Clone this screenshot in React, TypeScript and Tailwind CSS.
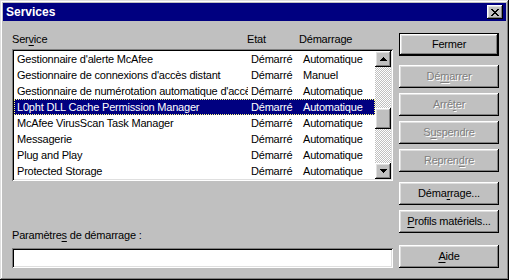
import React from "react";

const raised =
  "shadow-[inset_-1px_-1px_#000,inset_1px_1px_#fff,inset_-2px_-2px_#808080,inset_2px_2px_#dfdfdf]";
const sunken =
  "shadow-[inset_1px_1px_#808080,inset_-1px_-1px_#fff,inset_2px_2px_#000,inset_-2px_-2px_#dfdfdf]";

const rows: [string, string, string][] = [
  ["Gestionnaire d'alerte McAfee", "Démarré", "Automatique"],
  ["Gestionnaire de connexions d'accès distant", "Démarré", "Manuel"],
  ["Gestionnaire de numérotation automatique d'accès distant", "Démarré", "Automatique"],
  ["L0pht DLL Cache Permission Manager", "Démarré", "Automatique"],
  ["McAfee VirusScan Task Manager", "Démarré", "Automatique"],
  ["Messagerie", "Démarré", "Automatique"],
  ["Plug and Play", "Démarré", "Automatique"],
  ["Protected Storage", "Démarré", "Automatique"],
];

function Btn({
  pre,
  u,
  post,
  disabled,
  def,
  className = "",
}: {
  pre: string;
  u?: string;
  post?: string;
  disabled?: boolean;
  def?: boolean;
  className?: string;
}) {
  const inner = (
    <div
      className={`${raised} h-full w-full flex items-center justify-center ${
        disabled ? "text-[#808080] [text-shadow:1px_1px_0_#fff]" : "text-black"
      }`}
    >
      <span>
        {pre}
        {u && <span className="underline underline-offset-[2px]">{u}</span>}
        {post}
      </span>
    </div>
  );
  if (def) {
    return <div className={`h-[23px] w-[100px] border border-black ${className}`}>{inner}</div>;
  }
  return <div className={`h-[23px] w-[100px] ${className}`}>{inner}</div>;
}

function ScrollBtn({ down }: { down?: boolean }) {
  return (
    <div className={`${raised} h-[16px] w-[16px] bg-[#c0c0c0] flex items-center justify-center`}>
      <svg width="7" height="4" viewBox="0 0 7 4" shapeRendering="crispEdges">
        {down ? (
          <path d="M0 0h7v1H0zM1 1h5v1H1zM2 2h3v1H2zM3 3h1v1H3z" fill="#000" />
        ) : (
          <path d="M3 0h1v1H3zM2 1h3v1H2zM1 2h5v1H1zM0 3h7v1H0z" fill="#000" />
        )}
      </svg>
    </div>
  );
}

export default function App() {
  return (
    <div
      className="w-[509px] h-[280px] bg-[#c0c0c0] p-[3px] flex flex-col text-[11px] tracking-[-0.2px] text-black shadow-[inset_-1px_-1px_#000,inset_1px_1px_#dfdfdf,inset_-2px_-2px_#808080,inset_2px_2px_#fff]"
      style={{ fontFamily: '"Liberation Sans", Arial, sans-serif' }}
    >
      {/* title bar */}
      <div className="h-[18px] bg-[#000080] flex items-center justify-between pl-[3px] pr-[3px] shrink-0">
        <span className="text-white font-bold text-[12px] tracking-normal leading-none">Services</span>
        <div className={`${raised} w-[16px] h-[14px] bg-[#c0c0c0] flex items-center justify-center`}>
          <svg width="8" height="7" viewBox="0 0 8 7" shapeRendering="crispEdges">
            <path
              d="M0 0h2v1H0zM6 0h2v1H6zM1 1h2v1H1zM5 1h2v1H5zM2 2h4v1H2zM3 3h2v1H3zM2 4h4v1H2zM1 5h2v1H1zM5 5h2v1H5zM0 6h2v1H0zM6 6h2v1H6z"
              fill="#000"
            />
          </svg>
        </div>
      </div>

      <div className="flex flex-1 pl-[9px] gap-[6px]">
        {/* left column */}
        <div className="w-[381px] flex flex-col">
          <div className="mt-[11px] h-[14px] leading-[14px] flex">
            <span className="w-[235px]">
              Ser<span className="underline underline-offset-[2px]">v</span>ice
            </span>
            <span className="w-[52px]">Etat</span>
            <span>Démarrage</span>
          </div>
          <div className={`mt-[3px] h-[132px] bg-white p-[2px] flex ${sunken}`}>
            <div className="flex-1 overflow-hidden flex flex-col">
              {rows.map((r, i) => {
                const sel = i === 3;
                return (
                  <div
                    key={i}
                    className={`h-[16px] leading-[16px] shrink-0 flex whitespace-nowrap ${
                      sel ? "bg-[#000080] text-white outline outline-1 outline-dotted outline-offset-[-1px] outline-[#ffff80]" : ""
                    }`}
                  >
                    <span className="w-[234px] pl-[3px] overflow-hidden">{r[0]}</span>
                    <span className="w-[52px] pl-[3px] overflow-hidden">{r[1]}</span>
                    <span className="pl-[3px]">{r[2]}</span>
                  </div>
                );
              })}
            </div>
            <div className="w-[16px] flex flex-col">
              <ScrollBtn />
              <div className="flex-1 bg-[repeating-conic-gradient(#c0c0c0_0_25%,#fff_0_50%)] bg-[length:2px_2px] flex flex-col">
                <div className="h-[41px]" />
                <div className={`${raised} h-[21px] bg-[#c0c0c0]`} />
              </div>
              <ScrollBtn down />
            </div>
          </div>
          <div className="mt-[47px] h-[14px] leading-[14px]">
            Paramètre<span className="underline underline-offset-[2px]">s</span> de démarrage :
          </div>
          <div className={`mt-[6px] h-[20px] bg-white ${sunken}`} />
        </div>

        {/* right column */}
        <div className="w-[100px] flex flex-col pt-[12px]">
          <Btn pre="Fermer" def />
          <Btn pre="Dé" u="m" post="arrer" disabled className="mt-[9px]" />
          <Btn pre="Arrê" u="t" post="er" disabled className="mt-[5px]" />
          <Btn pre="S" u="u" post="spendre" disabled className="mt-[5px]" />
          <Btn pre="Repren" u="d" post="re" disabled className="mt-[5px]" />
          <Btn pre="Déma" u="r" post="rage..." className="mt-[10px]" />
          <Btn pre="" u="P" post="rofils matériels..." className="mt-[5px]" />
          <Btn pre="" u="A" post="ide" className="mt-[12px]" />
        </div>
      </div>
    </div>
  );
}
